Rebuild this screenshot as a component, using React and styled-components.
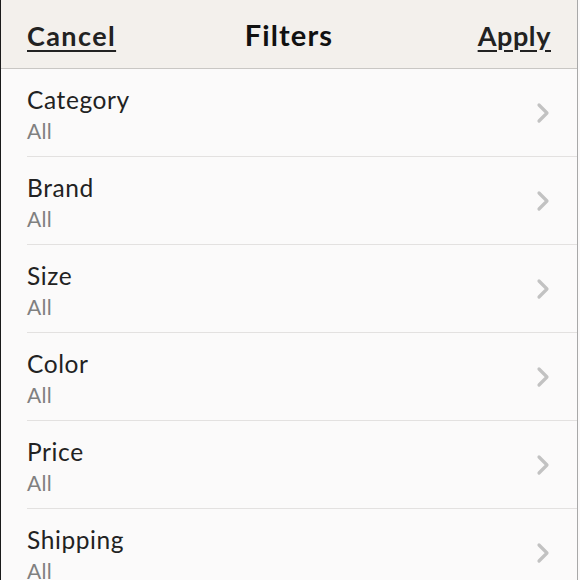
import React from "react";
import styled, { createGlobalStyle } from "styled-components";

const Global = createGlobalStyle`
  html, body { margin: 0; padding: 0; background: #fbfafa; }
  body { font-family: "Lato", "Open Sans", sans-serif; }
`;

const Screen = styled.div`
  width: 576px;
  height: 580px;
  overflow: hidden;
  border-left: 1px solid #1a1a1a;
  border-right: 1px solid #a8a8a8;
  background: #fbfafa;
  display: flex;
  flex-direction: column;
`;

const Header = styled.div`
  height: 68px;
  flex: none;
  background: #f3f0ec;
  border-bottom: 1px solid #c9c7c4;
  display: grid;
  grid-template-columns: 1fr auto 1fr;
  align-items: center;
  padding: 0 26px;
`;

const Link = styled.a`
  font-size: 27px;
  font-weight: 700;
  color: #222;
  letter-spacing: ${(p) => (p.$right ? "0.6px" : "1.4px")};
  text-decoration: underline;
  text-underline-offset: 4px;
  text-decoration-thickness: 2px;
  justify-self: ${(p) => (p.$right ? "end" : "start")};
  padding-top: 2px;
`;

const Title = styled.h1`
  margin: 0;
  font-size: 29px;
  font-weight: 700;
  color: #111;
  letter-spacing: 1.1px;
`;

const List = styled.div`
  display: flex;
  flex-direction: column;
`;

const Row = styled.div`
  height: 87px;
  margin-left: 26px;
  padding-right: 26px;
  border-bottom: 1px solid #e3e1e0;
  display: flex;
  align-items: center;
  justify-content: space-between;
`;

const Texts = styled.div`
  display: flex;
  flex-direction: column;
  gap: 4px;
  padding-top: 4px;
`;

const Label = styled.div`
  font-size: 24.5px;
  color: #222;
  line-height: 28px;
  letter-spacing: 0.6px;
`;

const Value = styled.div`
  font-size: 21px;
  color: #808080;
  line-height: 25px;
  letter-spacing: 0.3px;
`;

const Chevron = () => (
  <svg width="16" height="22" viewBox="0 0 16 22">
    <path d="M4 3 L12 11 L4 19" fill="none" stroke="#c2c2c2" strokeWidth="3.2" strokeLinecap="round" strokeLinejoin="round" />
  </svg>
);

const items = ["Category", "Brand", "Size", "Color", "Price", "Shipping"];

export default function App() {
  return (
    <>
      <Global />
      <Screen>
        <Header>
          <Link>Cancel</Link>
          <Title>Filters</Title>
          <Link $right>Apply</Link>
        </Header>
        <List>
          {items.map((it) => (
            <Row key={it}>
              <Texts>
                <Label>{it}</Label>
                <Value>All</Value>
              </Texts>
              <Chevron />
            </Row>
          ))}
        </List>
      </Screen>
    </>
  );
}
